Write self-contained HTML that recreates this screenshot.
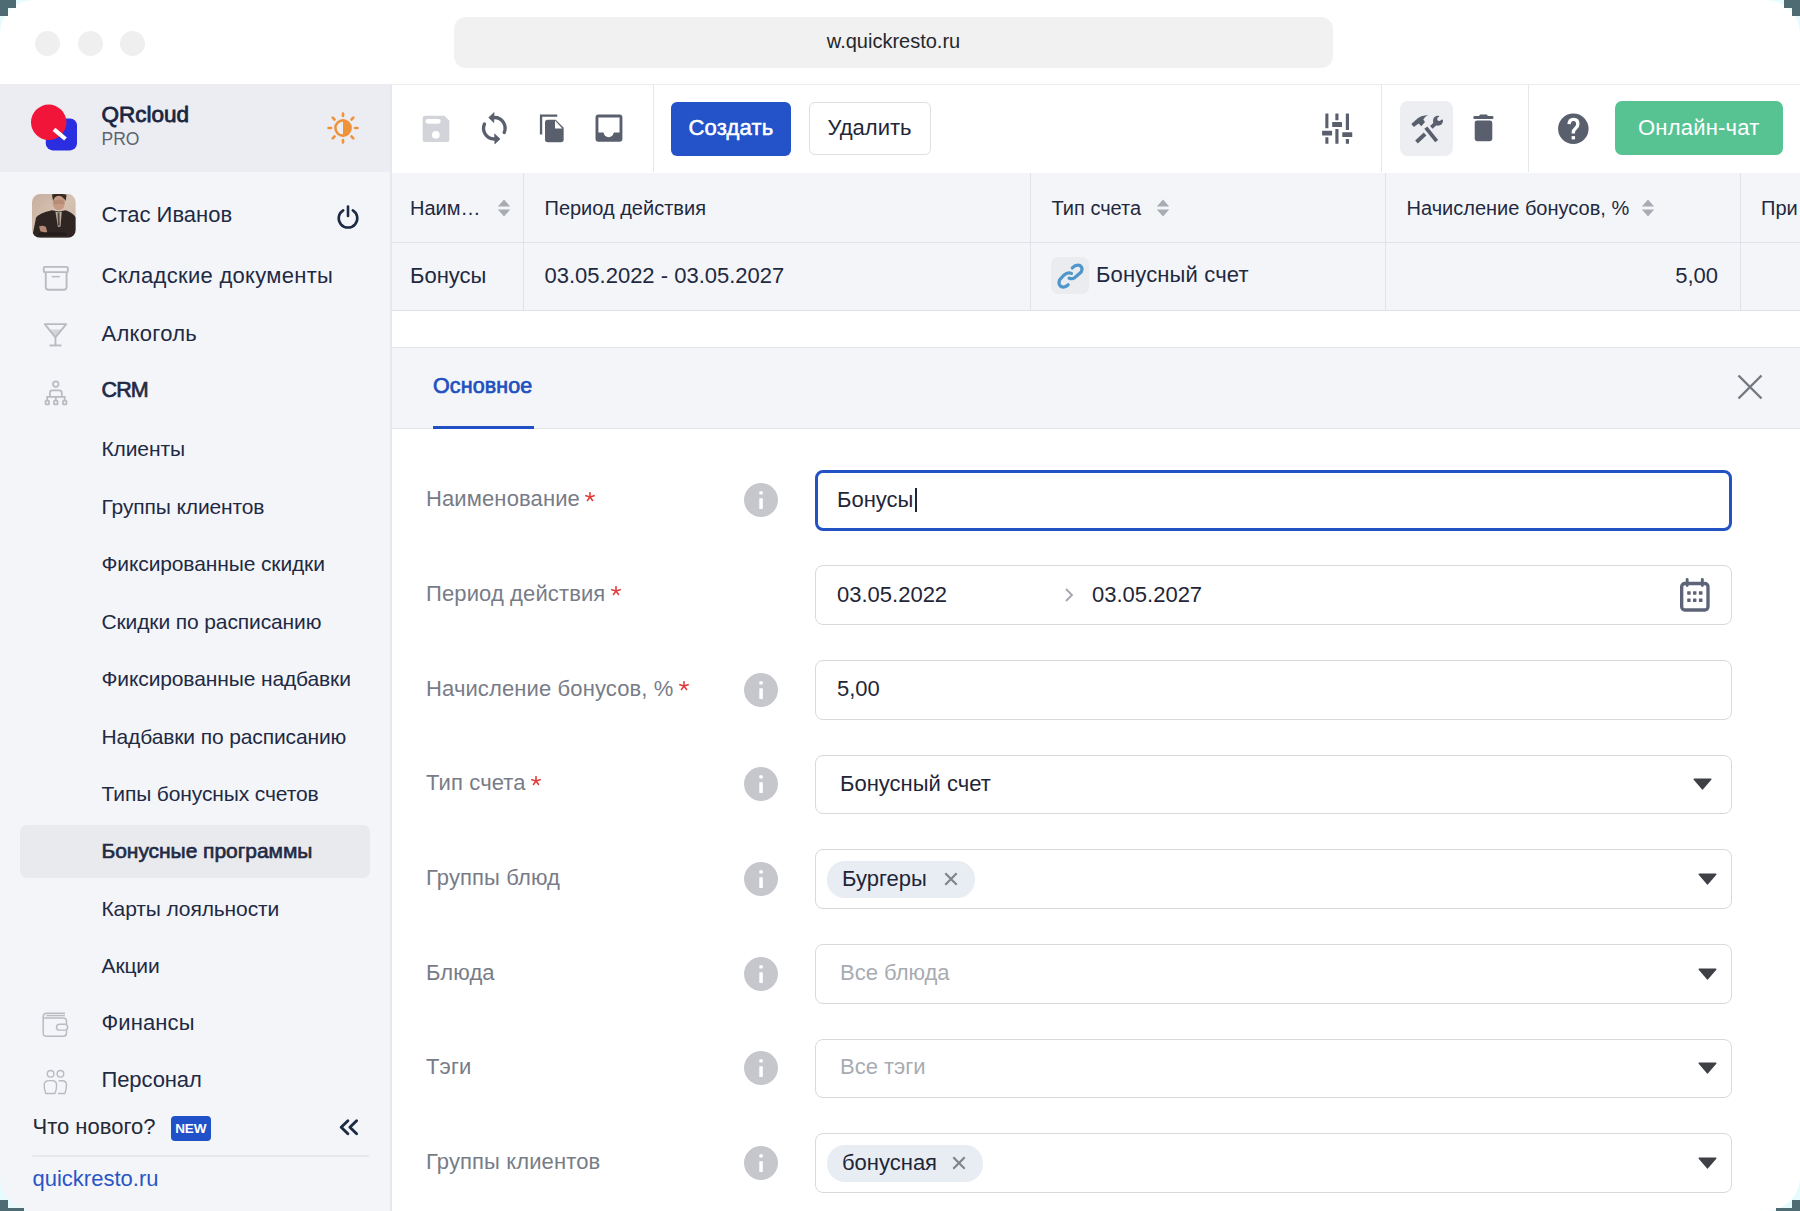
<!DOCTYPE html>
<html><head><meta charset="utf-8"><title>QRcloud</title>
<style>
html,body{margin:0;padding:0}
body{width:1800px;height:1211px;position:relative;overflow:hidden;background:#fff;font-family:"Liberation Sans",sans-serif}
.t{position:absolute;line-height:1;white-space:nowrap}
.r{position:absolute;display:block}
</style></head><body>
<div class="r" style="left:0px;top:0px;width:1800px;height:84px;background:#ffffff;"></div>
<div class="r" style="left:0px;top:84px;width:1800px;height:1px;background:#ececee;"></div>
<div class="r" style="left:35.0px;top:30.9px;width:25px;height:25px;background:#efefef;border-radius:50%"></div>
<div class="r" style="left:77.5px;top:30.9px;width:25px;height:25px;background:#efefef;border-radius:50%"></div>
<div class="r" style="left:120.0px;top:30.9px;width:25px;height:25px;background:#efefef;border-radius:50%"></div>
<div class="r" style="left:454px;top:17px;width:879px;height:51px;background:#f1f1f1;border-radius:12px"></div>
<div class="t" style="left:454px;width:879px;text-align:center;top:30.87px;font-size:20px;color:#25272c">w.quickresto.ru</div>
<div class="r" style="left:0px;top:85px;width:390px;height:1126px;background:#f3f5f9;"></div>
<div class="r" style="left:390px;top:85px;width:2px;height:1126px;background:#e6e8ec;"></div>
<div class="r" style="left:0px;top:85px;width:390px;height:87px;background:#ebedf2;"></div>
<svg class="r" style="left:28px;top:102px" width="54" height="52" viewBox="0 0 54 52"><rect x="17.8" y="16.4" width="31.2" height="32" rx="7" fill="#2b2ee0"/><circle cx="20.7" cy="20.3" r="17.7" fill="#f2153a"/><line x1="26" y1="27.3" x2="37.5" y2="37" stroke="#fff" stroke-width="4.2"/></svg>
<div class="t" style="left:101.5px;top:103.95px;font-size:22.5px;font-weight:400;color:#1b2540;letter-spacing:0px;-webkit-text-stroke:0.8px #1b2540;">QRcloud</div>
<div class="t" style="left:101.5px;top:130.68px;font-size:17.5px;font-weight:400;color:#5e6370;letter-spacing:0px;">PRO</div>
<svg class="r" style="left:326px;top:111px" width="34" height="34" viewBox="0 0 34 34"><g stroke="#f0923a" stroke-width="2.6" stroke-linecap="round"><line x1="17" y1="2.5" x2="17" y2="5"/><line x1="17" y1="29" x2="17" y2="31.5"/><line x1="2.5" y1="17" x2="5" y2="17"/><line x1="29" y1="17" x2="31.5" y2="17"/><line x1="6.7" y1="6.7" x2="8.5" y2="8.5"/><line x1="25.5" y1="25.5" x2="27.3" y2="27.3"/><line x1="6.7" y1="27.3" x2="8.5" y2="25.5"/><line x1="25.5" y1="8.5" x2="27.3" y2="6.7"/></g><circle cx="17" cy="17" r="7.6" fill="none" stroke="#f0923a" stroke-width="2.6"/><path d="M17 9.4 A7.6 7.6 0 0 1 17 24.6 Z" fill="#f0923a"/></svg>
<svg class="r" style="left:32.08px;top:193.86px" width="43.78" height="43.78" viewBox="95 90 1020 1020"><defs><clipPath id="avc"><rect x="95" y="90" width="1020" height="1020" rx="190"/></clipPath><linearGradient id="avg" x1="0" y1="0" x2="1" y2="1"><stop offset="0" stop-color="#c7ae9e"/><stop offset="0.5" stop-color="#d6c2b2"/><stop offset="1" stop-color="#c9b4a2"/></linearGradient></defs><g clip-path="url(#avc)"><rect x="95" y="90" width="1020" height="1020" fill="url(#avg)"/><path d="M560 100 Q720 60 900 110 L880 260 Q860 180 740 170 Q620 180 590 280 Z" fill="#3a2a24"/><ellipse cx="720" cy="300" rx="140" ry="170" fill="#c49a84"/><path d="M600 250 Q720 200 850 250 L845 330 Q720 300 600 330 Z" fill="#a77d6a" opacity="0.5"/><path d="M95 1110 L190 640 Q260 540 560 470 L720 500 L880 470 Q1060 540 1115 640 L1115 1110 Z" fill="#2f2624"/><path d="M640 500 L720 520 L790 500 L760 850 L700 860 Z" fill="#b9ad9e"/><path d="M690 530 L735 530 L745 820 L700 830 Z" fill="#5a4a44"/><path d="M260 850 Q340 800 420 860 L450 980 Q380 1000 290 960 Z" fill="#b58874"/><path d="M250 1000 Q600 960 900 1000 L900 1060 L250 1060 Z" fill="#241c1a"/></g></svg>
<div class="t" style="left:101.5px;top:203.87px;font-size:22px;font-weight:400;color:#1f2a44;letter-spacing:0px;">Стас Иванов</div>
<svg class="r" style="left:335px;top:204px" width="26" height="26" viewBox="0 0 26 26"><path d="M8.2 6.3 A9.3 9.3 0 1 0 17.8 6.3" fill="none" stroke="#1d2a44" stroke-width="2.6" stroke-linecap="round"/><line x1="13" y1="2.5" x2="13" y2="12" stroke="#1d2a44" stroke-width="2.6" stroke-linecap="round"/></svg>
<div class="r" style="left:20px;top:825px;width:350px;height:53px;background:#e9eaee;border-radius:7px"></div>
<div class="t" style="left:101.5px;top:265.07px;font-size:22px;font-weight:400;color:#1f2a44;letter-spacing:0.3px;">Складские документы</div>
<svg class="r" style="left:41.02px;top:263.65px" width="29.49" height="28.23" viewBox="40 45 235 225"><g fill="none" stroke="#b9bbc1" stroke-width="15"><rect x="62" y="68" width="192" height="42" rx="8"/><path d="M78 112 V228 Q78 250 100 250 H222 Q244 250 244 228 V112"/><path d="M125 146 H190" stroke-width="12"/></g></svg>
<div class="t" style="left:101.5px;top:322.52px;font-size:22px;font-weight:400;color:#1f2a44;letter-spacing:0.3px;">Алкоголь</div>
<svg class="r" style="left:42.27px;top:321.36px" width="26.98" height="26.98" viewBox="50 505 215 215"><g fill="none" stroke="#b9bbc1" stroke-width="15" stroke-linejoin="round"><path d="M72 530 H243 L157 635 Z"/><path d="M157 638 V698"/><path d="M110 700 H205"/></g><path d="M100 572 H215 L157 640 Z" fill="#b9bbc1" opacity="0.55"/></svg>
<div class="t" style="left:101.5px;top:380.40px;font-size:21.5px;font-weight:400;color:#1f2a44;letter-spacing:-0.9px;-webkit-text-stroke:0.7px #1f2a44;">CRM</div>
<svg class="r" style="left:42.90px;top:379.08px" width="25.72" height="28.23" viewBox="55 965 205 225"><g fill="none" stroke="#b9bbc1" stroke-width="14"><circle cx="157" cy="1005" r="22"/><path d="M110 1105 V1075 Q110 1055 130 1055 H185 Q205 1055 205 1075 V1105"/><path d="M88 1135 V1107 H228 V1135 M157 1107 V1135"/><rect x="75" y="1138" width="28" height="30" rx="5"/><rect x="143" y="1138" width="28" height="30" rx="5"/><rect x="214" y="1138" width="28" height="30" rx="5"/></g></svg>
<div class="t" style="left:101.5px;top:438.27px;font-size:21px;font-weight:400;color:#1f2a44;letter-spacing:-0.12px;">Клиенты</div>
<div class="t" style="left:101.5px;top:495.72px;font-size:21px;font-weight:400;color:#1f2a44;letter-spacing:-0.12px;">Группы клиентов</div>
<div class="t" style="left:101.5px;top:553.17px;font-size:21px;font-weight:400;color:#1f2a44;letter-spacing:-0.12px;">Фиксированные скидки</div>
<div class="t" style="left:101.5px;top:610.62px;font-size:21px;font-weight:400;color:#1f2a44;letter-spacing:-0.12px;">Скидки по расписанию</div>
<div class="t" style="left:101.5px;top:668.07px;font-size:21px;font-weight:400;color:#1f2a44;letter-spacing:-0.12px;">Фиксированные надбавки</div>
<div class="t" style="left:101.5px;top:725.52px;font-size:21px;font-weight:400;color:#1f2a44;letter-spacing:-0.12px;">Надбавки по расписанию</div>
<div class="t" style="left:101.5px;top:782.97px;font-size:21px;font-weight:400;color:#1f2a44;letter-spacing:-0.12px;">Типы бонусных счетов</div>
<div class="t" style="left:101.5px;top:840.42px;font-size:21px;font-weight:400;color:#1f2a44;letter-spacing:-0.05px;-webkit-text-stroke:0.65px #1f2a44;">Бонусные программы</div>
<div class="t" style="left:101.5px;top:897.87px;font-size:21px;font-weight:400;color:#1f2a44;letter-spacing:-0.12px;">Карты лояльности</div>
<div class="t" style="left:101.5px;top:955.32px;font-size:21px;font-weight:400;color:#1f2a44;letter-spacing:-0.12px;">Акции</div>
<div class="t" style="left:101.5px;top:1011.92px;font-size:22px;font-weight:400;color:#1f2a44;letter-spacing:0.1px;">Финансы</div>
<svg class="r" style="left:40.71px;top:1011.27px" width="29.02" height="27.45" viewBox="60 80 370 350"><g fill="none" stroke="#b9bbc1" stroke-width="19"><path d="M365 108 H135 Q88 108 88 155 V360 Q88 402 130 402 H345 Q385 402 385 362 V328"/><path d="M385 245 V208 Q385 168 345 168 H92"/><path d="M128 138 H365"/><rect x="258" y="248" width="142" height="76" rx="38"/></g></svg>
<div class="t" style="left:101.5px;top:1069.37px;font-size:22px;font-weight:400;color:#1f2a44;letter-spacing:-0.1px;">Персонал</div>
<svg class="r" style="left:42.27px;top:1069.31px" width="26.67" height="26.67" viewBox="80 820 340 340"><g fill="none" stroke="#b9bbc1" stroke-width="18"><circle cx="190" cy="882" r="42"/><circle cx="315" cy="882" r="42"/><path d="M128 1132 Q105 1075 108 1022 Q112 968 170 968 H212 Q262 968 266 1022 Q270 1075 245 1132 Z"/><path d="M292 970 H340 Q392 970 392 1025 Q392 1082 372 1132 H282"/></g></svg>
<div class="t" style="left:32.5px;top:1115.77px;font-size:22px;font-weight:400;color:#252a35;letter-spacing:0px;">Что нового?</div>
<div class="r" style="left:170.5px;top:1115.5px;width:40.5px;height:25.5px;background:#2151c8;border-radius:4px"></div>
<div class="t" style="left:170.5px;width:40.5px;text-align:center;top:1122.17px;font-size:13.5px;font-weight:700;color:#fff;letter-spacing:-0.2px">NEW</div>
<svg class="r" style="left:336px;top:1116px" width="24" height="22" viewBox="0 0 24 22"><path d="M11.9 4.8 L5.2 11.3 L11.9 17.8 M20.6 4.8 L13.9 11.3 L20.6 17.8" fill="none" stroke="#1d2a44" stroke-width="2.9" stroke-linejoin="round" stroke-linecap="round"/></svg>
<div class="r" style="left:32px;top:1154.5px;width:337px;height:2.5px;background:#e7e8ec;border-radius:2px"></div>
<div class="t" style="left:32.5px;top:1168.37px;font-size:22px;font-weight:400;color:#2a55c4;letter-spacing:0px;">quickresto.ru</div>
<div class="r" style="left:392px;top:85px;width:1408px;height:87px;background:#ffffff;"></div>
<div class="r" style="left:392px;top:172.5px;width:1408px;height:1px;background:#e4e5e9;"></div>
<div class="r" style="left:653px;top:85px;width:1px;height:87px;background:#e6e7eb;"></div>
<div class="r" style="left:1381px;top:85px;width:1px;height:87px;background:#e6e7eb;"></div>
<div class="r" style="left:1528px;top:85px;width:1px;height:87px;background:#e6e7eb;"></div>
<svg class="r" style="left:420.00px;top:112.67px" width="32.67" height="32.00" viewBox="150 190 490 480"><path d="M190 265 Q190 230 225 230 H515 L590 305 V590 Q590 625 555 625 H225 Q190 625 190 590 Z" fill="#d2d4d9"/><rect x="232" y="280" width="228" height="70" rx="35" fill="#fff"/><circle cx="387" cy="518" r="58" fill="#fff"/></svg>
<svg class="r" style="left:480.00px;top:111.33px" width="28.67" height="34.67" viewBox="1050 170 430 520"><path d="M1117 365 A160 160 0 0 0 1262 590" fill="none" stroke="#5a5f6e" stroke-width="50" stroke-linecap="round"/><path d="M1352 590 L1268 512 L1272 665 Z" fill="#5a5f6e" stroke="#5a5f6e" stroke-width="8" stroke-linejoin="round"/><path d="M1413 493 A160 160 0 0 0 1268 268" fill="none" stroke="#5a5f6e" stroke-width="50" stroke-linecap="round"/><path d="M1180 268 L1262 192 L1258 345 Z" fill="#5a5f6e" stroke="#5a5f6e" stroke-width="8" stroke-linejoin="round"/></svg>
<svg class="r" style="left:537.95px;top:113.45px" width="28.12" height="31.17" viewBox="130 220 460 510"><path d="M180 570 V262 H445" fill="none" stroke="#5a5f6e" stroke-width="38"/><path d="M245 375 Q245 330 290 330 H420 L550 460 V655 Q550 700 505 700 H290 Q245 700 245 655 Z" fill="#5a5f6e"/><path d="M408 342 V472 H528 Z" fill="#fff"/></svg>
<svg class="r" style="left:593.57px;top:113.45px" width="29.95" height="30.56" viewBox="1040 220 490 500"><rect x="1065" y="245" width="440" height="445" rx="48" fill="#5a5f6e"/><path d="M1112 292 H1458 V540 H1365 Q1345 615 1280 615 Q1215 615 1195 540 H1112 Z" fill="#fff"/></svg>
<div class="r" style="left:671px;top:101.5px;width:120px;height:54px;background:#2352c9;border-radius:6px"></div>
<div class="t" style="left:671px;width:120px;text-align:center;top:116.87px;font-size:22px;font-weight:400;color:#fff;-webkit-text-stroke:0.55px #fff;letter-spacing:0.2px">Создать</div>
<div class="r" style="left:808.5px;top:102px;width:122px;height:53px;background:#ffffff;border:1px solid #dedfe3;border-radius:6px;box-sizing:border-box"></div>
<div class="t" style="left:808.5px;width:122px;text-align:center;top:116.87px;font-size:22px;color:#1f2638">Удалить</div>
<svg class="r" style="left:1320.83px;top:111.67px" width="32.50" height="33.33" viewBox="130 140 390 400"><g fill="#5a5f6e"><rect x="182" y="158" width="37" height="178" rx="6"/><rect x="143" y="364" width="120" height="57" rx="4"/><rect x="182" y="444" width="37" height="78" rx="6"/><rect x="302" y="158" width="38" height="82" rx="6"/><rect x="264" y="261" width="118" height="58" rx="4"/><rect x="302" y="344" width="38" height="178" rx="6"/><rect x="428" y="158" width="38" height="198" rx="6"/><rect x="385" y="384" width="120" height="57" rx="4"/><rect x="428" y="464" width="38" height="58" rx="6"/></g></svg>
<div class="r" style="left:1399.5px;top:101px;width:53px;height:54.5px;background:#eceef2;border-radius:8px"></div>
<svg class="r" style="left:1409.17px;top:113.33px" width="35.83" height="31.67" viewBox="1190 160 430 380"><line x1="1392" y1="335" x2="1522" y2="498" stroke="#5a5f6e" stroke-width="46"/><path d="M1218 292 L1295 222 Q1340 190 1418 183 Q1375 205 1362 238 L1382 268 L1338 318 L1305 285 L1248 328 Z" fill="#5a5f6e"/><line x1="1280" y1="508" x2="1383" y2="412" stroke="#5a5f6e" stroke-width="46"/><line x1="1458" y1="333" x2="1520" y2="276" stroke="#5a5f6e" stroke-width="46"/><mask id="wm"><rect x="1190" y="160" width="430" height="380" fill="#fff"/><circle cx="1552" cy="232" r="24" fill="#000"/><path d="M1540 220 L1575 160 L1640 160 L1640 230 L1565 245 Z" fill="#000"/></mask><circle cx="1538" cy="252" r="60" fill="#5a5f6e" mask="url(#wm)"/></svg>
<svg class="r" style="left:1472.44px;top:113.22px" width="23.33" height="29.56" viewBox="160 170 300 380"><rect x="255" y="188" width="105" height="40" rx="14" fill="#5a5f6e"/><rect x="178" y="208" width="258" height="38" rx="16" fill="#5a5f6e"/><rect x="195" y="268" width="226" height="265" rx="32" fill="#5a5f6e"/></svg>
<svg class="r" style="left:1557.22px;top:111.67px" width="32.67" height="33.44" viewBox="1250 150 420 430"><circle cx="1460" cy="365" r="196" fill="#5a5f6e"/><path d="M1405 305 Q1410 245 1462 245 Q1518 245 1518 305 Q1518 340 1488 362 Q1460 385 1460 410 V425" fill="none" stroke="#fff" stroke-width="44"/><rect x="1438" y="460" width="44" height="42" fill="#fff"/></svg>
<div class="r" style="left:1614.5px;top:101px;width:168.5px;height:54px;background:#57c393;border-radius:7px"></div>
<div class="t" style="left:1614.5px;width:168.5px;text-align:center;top:116.87px;font-size:22px;color:#fff;letter-spacing:0.2px">Онлайн-чат</div>
<div class="r" style="left:392px;top:173px;width:1408px;height:138px;background:#f3f5f9;"></div>
<div class="r" style="left:392px;top:242px;width:1408px;height:1px;background:#e0e2e7;"></div>
<div class="r" style="left:392px;top:310px;width:1408px;height:1px;background:#e0e2e7;"></div>
<div class="r" style="left:523px;top:173px;width:1px;height:137px;background:#e0e2e7;"></div>
<div class="r" style="left:1030px;top:173px;width:1px;height:137px;background:#e0e2e7;"></div>
<div class="r" style="left:1385px;top:173px;width:1px;height:137px;background:#e0e2e7;"></div>
<div class="r" style="left:1740px;top:173px;width:1px;height:137px;background:#e0e2e7;"></div>
<div class="t" style="left:410px;top:197.57px;font-size:20px;font-weight:400;color:#1f2940;letter-spacing:0px;">Наим…</div>
<svg class="r" style="left:496.7px;top:199px" width="14" height="18" viewBox="0 0 14 18"><path d="M7 0.5 L13.2 7.5 H0.8 Z M7 17.5 L13.2 10.5 H0.8 Z" fill="#a9acb3"/></svg>
<div class="t" style="left:544.5px;top:197.57px;font-size:20px;font-weight:400;color:#1f2940;letter-spacing:0px;">Период действия</div>
<div class="t" style="left:1051.5px;top:197.57px;font-size:20px;font-weight:400;color:#1f2940;letter-spacing:0px;">Тип счета</div>
<svg class="r" style="left:1155.7px;top:199px" width="14" height="18" viewBox="0 0 14 18"><path d="M7 0.5 L13.2 7.5 H0.8 Z M7 17.5 L13.2 10.5 H0.8 Z" fill="#a9acb3"/></svg>
<div class="t" style="left:1406.5px;top:197.57px;font-size:20px;font-weight:400;color:#1f2940;letter-spacing:0px;">Начисление бонусов, %</div>
<svg class="r" style="left:1640.7px;top:199px" width="14" height="18" viewBox="0 0 14 18"><path d="M7 0.5 L13.2 7.5 H0.8 Z M7 17.5 L13.2 10.5 H0.8 Z" fill="#a9acb3"/></svg>
<div class="t" style="left:1761px;top:197.57px;font-size:20px;font-weight:400;color:#1f2940;letter-spacing:0px;">При</div>
<div class="t" style="left:410px;top:265.37px;font-size:22px;font-weight:400;color:#1f2940;letter-spacing:0px;">Бонусы</div>
<div class="t" style="left:544.5px;top:265.37px;font-size:22px;font-weight:400;color:#1f2940;letter-spacing:0px;">03.05.2022 - 03.05.2027</div>
<div class="r" style="left:1051.2px;top:257px;width:38px;height:37px;background:#eaecf0;border-radius:7px"></div>
<svg class="r" style="left:1055.32px;top:260.32px" width="30.97" height="30.97" viewBox="250 250 750 750"><g fill="none" stroke="#4f97cb" stroke-width="78" stroke-linecap="round" stroke-linejoin="round"><path d="M668 442 Q765 345 855 385 Q935 445 885 540 L725 680 Q665 722 592 690"/><path d="M648 575 Q560 530 462 620 L362 730 Q322 830 392 890 Q472 942 570 850"/></g></svg>
<div class="t" style="left:1096px;top:264.37px;font-size:22px;font-weight:400;color:#1f2940;letter-spacing:0.15px;">Бонусный счет</div>
<div class="t" style="right:82px;top:265.37px;font-size:22px;font-weight:400;color:#1f2940;letter-spacing:0px;">5,00</div>
<div class="r" style="left:392px;top:311px;width:1408px;height:36px;background:#ffffff;"></div>
<div class="r" style="left:392px;top:347px;width:1408px;height:1px;background:#e3e5ea;"></div>
<div class="r" style="left:392px;top:348px;width:1408px;height:80px;background:#f3f5f9;"></div>
<div class="r" style="left:392px;top:428px;width:1408px;height:1px;background:#e3e5ea;"></div>
<div class="t" style="left:433px;top:376.20px;font-size:21.5px;font-weight:400;color:#2150bf;letter-spacing:0.1px;-webkit-text-stroke:0.7px #2150bf;">Основное</div>
<div class="r" style="left:432.5px;top:426px;width:101.5px;height:3px;background:#2150c4;"></div>
<svg class="r" style="left:1736px;top:373px" width="28" height="28" viewBox="0 0 28 28"><path d="M2.5 2.5 L25.5 25.5 M25.5 2.5 L2.5 25.5" stroke="#74777f" stroke-width="2.4" fill="none"/></svg>
<div class="r" style="left:392px;top:429px;width:1408px;height:782px;background:#ffffff;"></div>
<div class="t" style="left:426px;top:488.27px;font-size:22px;color:#787c87;letter-spacing:0.12px">Наименование<svg style="display:inline-block;vertical-align:top;position:relative;top:3.5px;margin-left:5.5px" width="10" height="10" viewBox="-5.5 -5.5 11 11"><g stroke="#e2393b" stroke-width="1.7" stroke-linecap="round"><line x1="0" y1="0" x2="0" y2="-4.8"/><line x1="0" y1="0" x2="4.56" y2="-1.48"/><line x1="0" y1="0" x2="2.82" y2="3.88"/><line x1="0" y1="0" x2="-2.82" y2="3.88"/><line x1="0" y1="0" x2="-4.56" y2="-1.48"/></g></svg></div>
<svg class="r" style="left:743.5px;top:483.2px" width="34" height="34" viewBox="0 0 34 34"><circle cx="17" cy="17" r="17" fill="#c5c7cc"/><rect x="15.3" y="8.3" width="3.5" height="3.3" rx="0.8" fill="#fff"/><rect x="15.3" y="15.3" width="3.5" height="10.6" rx="0.5" fill="#fff"/></svg>
<div class="t" style="left:426px;top:582.87px;font-size:22px;color:#787c87;letter-spacing:0.12px">Период действия<svg style="display:inline-block;vertical-align:top;position:relative;top:3.5px;margin-left:5.5px" width="10" height="10" viewBox="-5.5 -5.5 11 11"><g stroke="#e2393b" stroke-width="1.7" stroke-linecap="round"><line x1="0" y1="0" x2="0" y2="-4.8"/><line x1="0" y1="0" x2="4.56" y2="-1.48"/><line x1="0" y1="0" x2="2.82" y2="3.88"/><line x1="0" y1="0" x2="-2.82" y2="3.88"/><line x1="0" y1="0" x2="-4.56" y2="-1.48"/></g></svg></div>
<div class="t" style="left:426px;top:677.57px;font-size:22px;color:#787c87;letter-spacing:0.12px">Начисление бонусов, %<svg style="display:inline-block;vertical-align:top;position:relative;top:3.5px;margin-left:5.5px" width="10" height="10" viewBox="-5.5 -5.5 11 11"><g stroke="#e2393b" stroke-width="1.7" stroke-linecap="round"><line x1="0" y1="0" x2="0" y2="-4.8"/><line x1="0" y1="0" x2="4.56" y2="-1.48"/><line x1="0" y1="0" x2="2.82" y2="3.88"/><line x1="0" y1="0" x2="-2.82" y2="3.88"/><line x1="0" y1="0" x2="-4.56" y2="-1.48"/></g></svg></div>
<svg class="r" style="left:743.5px;top:672.5px" width="34" height="34" viewBox="0 0 34 34"><circle cx="17" cy="17" r="17" fill="#c5c7cc"/><rect x="15.3" y="8.3" width="3.5" height="3.3" rx="0.8" fill="#fff"/><rect x="15.3" y="15.3" width="3.5" height="10.6" rx="0.5" fill="#fff"/></svg>
<div class="t" style="left:426px;top:772.27px;font-size:22px;color:#787c87;letter-spacing:0.12px">Тип счета<svg style="display:inline-block;vertical-align:top;position:relative;top:3.5px;margin-left:5.5px" width="10" height="10" viewBox="-5.5 -5.5 11 11"><g stroke="#e2393b" stroke-width="1.7" stroke-linecap="round"><line x1="0" y1="0" x2="0" y2="-4.8"/><line x1="0" y1="0" x2="4.56" y2="-1.48"/><line x1="0" y1="0" x2="2.82" y2="3.88"/><line x1="0" y1="0" x2="-2.82" y2="3.88"/><line x1="0" y1="0" x2="-4.56" y2="-1.48"/></g></svg></div>
<svg class="r" style="left:743.5px;top:767.2px" width="34" height="34" viewBox="0 0 34 34"><circle cx="17" cy="17" r="17" fill="#c5c7cc"/><rect x="15.3" y="8.3" width="3.5" height="3.3" rx="0.8" fill="#fff"/><rect x="15.3" y="15.3" width="3.5" height="10.6" rx="0.5" fill="#fff"/></svg>
<div class="t" style="left:426px;top:866.97px;font-size:22px;color:#787c87;letter-spacing:0.12px">Группы блюд</div>
<svg class="r" style="left:743.5px;top:861.9px" width="34" height="34" viewBox="0 0 34 34"><circle cx="17" cy="17" r="17" fill="#c5c7cc"/><rect x="15.3" y="8.3" width="3.5" height="3.3" rx="0.8" fill="#fff"/><rect x="15.3" y="15.3" width="3.5" height="10.6" rx="0.5" fill="#fff"/></svg>
<div class="t" style="left:426px;top:961.57px;font-size:22px;color:#787c87;letter-spacing:0.12px">Блюда</div>
<svg class="r" style="left:743.5px;top:956.5px" width="34" height="34" viewBox="0 0 34 34"><circle cx="17" cy="17" r="17" fill="#c5c7cc"/><rect x="15.3" y="8.3" width="3.5" height="3.3" rx="0.8" fill="#fff"/><rect x="15.3" y="15.3" width="3.5" height="10.6" rx="0.5" fill="#fff"/></svg>
<div class="t" style="left:426px;top:1056.27px;font-size:22px;color:#787c87;letter-spacing:0.12px">Тэги</div>
<svg class="r" style="left:743.5px;top:1051.2px" width="34" height="34" viewBox="0 0 34 34"><circle cx="17" cy="17" r="17" fill="#c5c7cc"/><rect x="15.3" y="8.3" width="3.5" height="3.3" rx="0.8" fill="#fff"/><rect x="15.3" y="15.3" width="3.5" height="10.6" rx="0.5" fill="#fff"/></svg>
<div class="t" style="left:426px;top:1150.97px;font-size:22px;color:#787c87;letter-spacing:0.12px">Группы клиентов</div>
<svg class="r" style="left:743.5px;top:1145.9px" width="34" height="34" viewBox="0 0 34 34"><circle cx="17" cy="17" r="17" fill="#c5c7cc"/><rect x="15.3" y="8.3" width="3.5" height="3.3" rx="0.8" fill="#fff"/><rect x="15.3" y="15.3" width="3.5" height="10.6" rx="0.5" fill="#fff"/></svg>
<div class="r" style="left:815px;top:470.2px;width:917px;height:60.5px;background:#fff;border:3px solid #2352c4;border-radius:8px;box-sizing:border-box"></div>
<div class="t" style="left:837px;top:489.37px;font-size:22px;font-weight:400;color:#1f2637;letter-spacing:0px;">Бонусы</div>
<div class="r" style="left:914.5px;top:488px;width:2px;height:24px;background:#1f2637;"></div>
<div class="r" style="left:815px;top:565.3px;width:917px;height:59.5px;background:#fff;border:1.5px solid #d8d9dc;border-radius:8px;box-sizing:border-box"></div>
<div class="t" style="left:837px;top:583.57px;font-size:22px;font-weight:400;color:#1f2637;letter-spacing:0px;">03.05.2022</div>
<svg class="r" style="left:1063px;top:586px" width="12" height="18" viewBox="0 0 12 18"><path d="M3 3 L9 9 L3 15" fill="none" stroke="#a3a6ad" stroke-width="1.8"/></svg>
<div class="t" style="left:1092px;top:583.57px;font-size:22px;font-weight:400;color:#1f2637;letter-spacing:0px;">03.05.2027</div>
<svg class="r" style="left:1677.33px;top:576.00px" width="36.00" height="38.67" viewBox="560 240 540 580"><rect x="630" y="352" width="395" height="398" rx="48" fill="none" stroke="#5d6478" stroke-width="50"/><path d="M712 292 V382 M940 292 V382" stroke="#5d6478" stroke-width="44" stroke-linecap="round"/><g fill="#5d6478"><rect x="713" y="468" width="52" height="52" rx="6"/><rect x="800" y="468" width="52" height="52" rx="6"/><rect x="888" y="468" width="55" height="52" rx="6"/><rect x="713" y="578" width="52" height="52" rx="6"/><rect x="800" y="578" width="52" height="52" rx="6"/><rect x="888" y="578" width="55" height="52" rx="6"/></g></svg>
<div class="r" style="left:815px;top:660.0px;width:917px;height:59.5px;background:#fff;border:1.5px solid #d8d9dc;border-radius:8px;box-sizing:border-box"></div>
<div class="t" style="left:837px;top:678.37px;font-size:22px;font-weight:400;color:#1f2637;letter-spacing:0px;">5,00</div>
<div class="r" style="left:815px;top:754.7px;width:917px;height:59.5px;background:#fff;border:1.5px solid #d8d9dc;border-radius:8px;box-sizing:border-box"></div>
<div class="t" style="left:840px;top:772.87px;font-size:22px;font-weight:400;color:#1f2637;letter-spacing:0px;">Бонусный счет</div>
<svg class="r" style="left:1693.2px;top:778.2px" width="19" height="12" viewBox="0 0 19 12"><path d="M1.3 1.3 H17.7 L9.5 10.8 Z" fill="#3e4046" stroke="#3e4046" stroke-width="1.6" stroke-linejoin="round"/></svg>
<div class="r" style="left:815px;top:849.4px;width:917px;height:59.5px;background:#fff;border:1.5px solid #d8d9dc;border-radius:8px;box-sizing:border-box"></div>
<div class="r" style="left:827px;top:861px;width:148px;height:37px;background:#e8ecf3;border-radius:18px"></div>
<div class="t" style="left:842px;top:868.37px;font-size:22px;font-weight:400;color:#1f2637;letter-spacing:0px;">Бургеры</div>
<svg class="r" style="left:942px;top:870px" width="18" height="18" viewBox="0 0 18 18"><path d="M3.3 3.3 L14.7 14.7 M14.7 3.3 L3.3 14.7" stroke="#80838b" stroke-width="2.2"/></svg>
<svg class="r" style="left:1697.5px;top:872.9px" width="19" height="12" viewBox="0 0 19 12"><path d="M1.3 1.3 H17.7 L9.5 10.8 Z" fill="#3e4046" stroke="#3e4046" stroke-width="1.6" stroke-linejoin="round"/></svg>
<div class="r" style="left:815px;top:944.0px;width:917px;height:59.5px;background:#fff;border:1.5px solid #d8d9dc;border-radius:8px;box-sizing:border-box"></div>
<div class="t" style="left:840px;top:961.87px;font-size:22px;font-weight:400;color:#a8abb2;letter-spacing:0px;">Все блюда</div>
<svg class="r" style="left:1697.5px;top:967.5px" width="19" height="12" viewBox="0 0 19 12"><path d="M1.3 1.3 H17.7 L9.5 10.8 Z" fill="#3e4046" stroke="#3e4046" stroke-width="1.6" stroke-linejoin="round"/></svg>
<div class="r" style="left:815px;top:1038.7px;width:917px;height:59.5px;background:#fff;border:1.5px solid #d8d9dc;border-radius:8px;box-sizing:border-box"></div>
<div class="t" style="left:840px;top:1056.37px;font-size:22px;font-weight:400;color:#a8abb2;letter-spacing:0px;">Все тэги</div>
<svg class="r" style="left:1697.5px;top:1062.2px" width="19" height="12" viewBox="0 0 19 12"><path d="M1.3 1.3 H17.7 L9.5 10.8 Z" fill="#3e4046" stroke="#3e4046" stroke-width="1.6" stroke-linejoin="round"/></svg>
<div class="r" style="left:815px;top:1133.4px;width:917px;height:59.5px;background:#fff;border:1.5px solid #d8d9dc;border-radius:8px;box-sizing:border-box"></div>
<div class="r" style="left:827px;top:1144.5px;width:156px;height:37px;background:#e8ecf3;border-radius:18px"></div>
<div class="t" style="left:842px;top:1152.37px;font-size:22px;font-weight:400;color:#1f2637;letter-spacing:0px;">бонусная</div>
<svg class="r" style="left:950px;top:1154px" width="18" height="18" viewBox="0 0 18 18"><path d="M3.3 3.3 L14.7 14.7 M14.7 3.3 L3.3 14.7" stroke="#80838b" stroke-width="2.2"/></svg>
<svg class="r" style="left:1697.5px;top:1156.9px" width="19" height="12" viewBox="0 0 19 12"><path d="M1.3 1.3 H17.7 L9.5 10.8 Z" fill="#3e4046" stroke="#3e4046" stroke-width="1.6" stroke-linejoin="round"/></svg>
<svg class="r" style="left:0px;top:0px" width="36" height="36" viewBox="0 0 36 36"><path d="M0 0 H34 A34 34 0 0 0 0 34 Z" fill="#e6fbfd"/></svg>
<svg class="r" style="left:1764px;top:0px" width="36" height="36" viewBox="0 0 36 36"><path d="M36 0 H2 A34 34 0 0 1 36 34 Z" fill="#e6fbfd"/></svg>
<svg class="r" style="left:0px;top:1175px" width="36" height="36" viewBox="0 0 36 36"><path d="M0 36 H34 A34 34 0 0 1 0 2 Z" fill="#e6fbfd"/></svg>
<svg class="r" style="left:1764px;top:1175px" width="36" height="36" viewBox="0 0 36 36"><path d="M36 36 H2 A34 34 0 0 0 36 2 Z" fill="#e6fbfd"/></svg>
<div class="r" style="left:0px;top:0px;width:16px;height:8px;background:#4e6a72;"></div>
<div class="r" style="left:0px;top:8px;width:8px;height:8px;background:#4e6a72;"></div>
<div class="r" style="left:1784px;top:0px;width:16px;height:8px;background:#4e6a72;"></div>
<div class="r" style="left:1792px;top:8px;width:8px;height:8px;background:#4e6a72;"></div>
<div class="r" style="left:0px;top:1200px;width:8px;height:11px;background:#4e6a72;"></div>
<div class="r" style="left:0px;top:1208px;width:24px;height:3px;background:#4e6a72;"></div>
<div class="r" style="left:1792px;top:1200px;width:8px;height:11px;background:#4e6a72;"></div>
<div class="r" style="left:1776px;top:1208px;width:24px;height:3px;background:#4e6a72;"></div>
</body></html>
